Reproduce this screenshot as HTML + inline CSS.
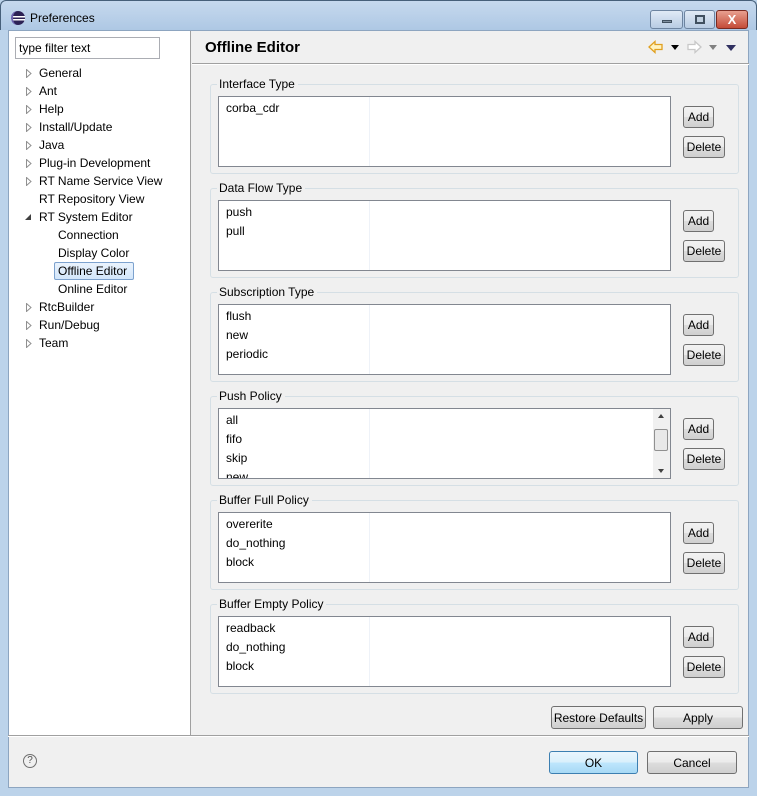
<!DOCTYPE html>
<html><head><style>
*{margin:0;padding:0;box-sizing:border-box}
body{width:757px;height:796px;overflow:hidden;background:#bcd3ea;font-family:"Liberation Sans",sans-serif;font-size:12px;color:#000;position:relative}
.a{position:absolute}
.title{left:0;top:0;width:757px;height:30px;background:linear-gradient(#c6d9ee,#aec8e4);border:1px solid #47607a;border-bottom:none;border-radius:6px 6px 0 0}
.inner{left:8px;top:30px;width:741px;height:758px;background:#f0f0f0;border:1px solid #8da5c0}
.left{left:9px;top:31px;width:182px;height:704px;background:#fff;border-right:1px solid #a0a0a0}
.btn{position:absolute;border:1px solid #707070;border-radius:3px;background:linear-gradient(#f2f2f2 0%,#ebebeb 50%,#dddddd 51%,#cfcfcf 100%);text-align:center;line-height:21px;font-size:12px}
.tree div{position:absolute;white-space:nowrap}
.arr{width:9px;height:9px}
.grp{position:absolute;left:210px;width:529px;height:90px;border:1px solid #d5dfe5;border-radius:3px}
.glab{position:absolute;left:6px;top:-9px;background:#f0f0f0;padding:0 3px 0 2px;line-height:16px}
.list{position:absolute;left:7px;top:11px;width:453px;height:71px;background:#fff;border:1px solid #828790;overflow:hidden}
.list .col{position:absolute;left:150px;top:0;width:1px;height:100%;background:#eef2f8}
.list div.i{position:absolute;left:7px;line-height:19px;margin-top:1px}
</style></head><body>
<div class="a title"></div>
<svg class="a" style="left:10px;top:10px" width="16" height="16"><circle cx="8" cy="8" r="7" fill="#2c2255"/><rect x="1" y="6" width="14" height="1.5" fill="#fff"/><rect x="1" y="9" width="14" height="1.5" fill="#fff"/><path d="M8 1a7 7 0 0 0 0 14a5 7 0 0 1 0-14z" fill="#6c63b0"/></svg>
<div class="a" style="left:30px;top:11px;font-size:12px">Preferences</div>
<div class="a" style="left:650px;top:10px;width:33px;height:19px;border:1px solid #6d84a0;border-radius:3px;background:linear-gradient(#e0eaf6,#b8cce3)"><div class="a" style="left:11px;top:9px;width:10px;height:3px;background:#8090a0;border:1px solid #405060"></div></div>
<div class="a" style="left:684px;top:10px;width:31px;height:19px;border:1px solid #6d84a0;border-radius:3px;background:linear-gradient(#e0eaf6,#b8cce3)"><div class="a" style="left:10px;top:4px;width:10px;height:9px;border:2px solid #405060;background:#c0d0e0"></div></div>
<div class="a" style="left:716px;top:10px;width:32px;height:19px;border:1px solid #7a2a20;border-radius:3px;background:linear-gradient(#e8a090,#c44c38);color:#fff;font-weight:bold;text-align:center;line-height:17px;font-size:13px">X</div>
<div class="a inner"></div>
<div class="a left"></div>
<div class="a" style="left:15px;top:37px;width:145px;height:22px;border:1px solid #abadb3;background:#fff;padding-left:3px;line-height:20px">type filter text</div>
<svg class="a" width="0" height="0"><defs><symbol id="t" viewBox="0 0 9 9"><path d="M2.5 0.5L7 4.5L2.5 8.5Z" fill="#fff" stroke="#909090"/></symbol></defs></svg>
<div class="tree">
<svg style="position:absolute;left:24px;top:69px" class="arr"><use href="#t"/></svg><div style="left:39px;top:66px">General</div>
<svg style="position:absolute;left:24px;top:87px" class="arr"><use href="#t"/></svg><div style="left:39px;top:84px">Ant</div>
<svg style="position:absolute;left:24px;top:105px" class="arr"><use href="#t"/></svg><div style="left:39px;top:102px">Help</div>
<svg style="position:absolute;left:24px;top:123px" class="arr"><use href="#t"/></svg><div style="left:39px;top:120px">Install/Update</div>
<svg style="position:absolute;left:24px;top:141px" class="arr"><use href="#t"/></svg><div style="left:39px;top:138px">Java</div>
<svg style="position:absolute;left:24px;top:159px" class="arr"><use href="#t"/></svg><div style="left:39px;top:156px">Plug-in Development</div>
<svg style="position:absolute;left:24px;top:177px" class="arr"><use href="#t"/></svg><div style="left:39px;top:174px">RT Name Service View</div>
<div style="left:39px;top:192px">RT Repository View</div>
<div style="left:25px;top:214px;width:0;height:0;border-right:6px solid #404040;border-top:6px solid transparent"></div><div style="left:39px;top:210px">RT System Editor</div>
<div style="left:58px;top:228px">Connection</div>
<div style="left:58px;top:246px">Display Color</div>
<div style="left:54px;top:262px;width:80px;height:18px;border:1px solid #7da2ce;border-radius:2px;background:linear-gradient(#eaf3fd,#d3e6fa)"></div><div style="left:58px;top:264px">Offline Editor</div>
<div style="left:58px;top:282px">Online Editor</div>
<svg style="position:absolute;left:24px;top:303px" class="arr"><use href="#t"/></svg><div style="left:39px;top:300px">RtcBuilder</div>
<svg style="position:absolute;left:24px;top:321px" class="arr"><use href="#t"/></svg><div style="left:39px;top:318px">Run/Debug</div>
<svg style="position:absolute;left:24px;top:339px" class="arr"><use href="#t"/></svg><div style="left:39px;top:336px">Team</div>
</div>
<div class="a" style="left:205px;top:39px;font-size:15px;font-weight:bold">Offline Editor</div>
<div class="a" style="left:192px;top:63px;width:557px;height:1px;background:#a0a0a0"></div>
<div class="a" style="left:192px;top:64px;width:557px;height:1px;background:#fff"></div>
<svg class="a" style="left:648px;top:40px" width="16" height="14"><path d="M1 7L7 1.5V4.5H14V9.5H7V12.5Z" fill="#fff3c0" stroke="#e0a020" stroke-width="1.3"/></svg>
<div class="a" style="left:671px;top:45px;border-top:5px solid #000;border-left:4px solid transparent;border-right:4px solid transparent"></div>
<svg class="a" style="left:686px;top:40px" width="16" height="14"><path d="M15 7L9 1.5V4.5H2V9.5H9V12.5Z" fill="#fff" stroke="#c8c8c8" stroke-width="1.3"/></svg>
<div class="a" style="left:709px;top:45px;border-top:5px solid #808080;border-left:4px solid transparent;border-right:4px solid transparent"></div>
<div class="a" style="left:726px;top:45px;border-top:6px solid #303060;border-left:5px solid transparent;border-right:5px solid transparent"></div>

<div class="grp" style="top:84px"><div class="glab">Interface Type</div><div class="list"><div class="col"></div><div class="i" style="top:1px">corba_cdr</div></div></div>
<div class="grp" style="top:188px"><div class="glab">Data Flow Type</div><div class="list"><div class="col"></div><div class="i" style="top:1px">push</div><div class="i" style="top:20px">pull</div></div></div>
<div class="grp" style="top:292px"><div class="glab">Subscription Type</div><div class="list"><div class="col"></div><div class="i" style="top:1px">flush</div><div class="i" style="top:20px">new</div><div class="i" style="top:39px">periodic</div></div></div>
<div class="grp" style="top:396px"><div class="glab">Push Policy</div><div class="list"><div class="col"></div><div class="i" style="top:1px">all</div><div class="i" style="top:20px">fifo</div><div class="i" style="top:39px">skip</div><div class="i" style="top:58px">new</div>
<div style="position:absolute;right:0;top:0;width:17px;height:69px;background:#f0f0f0"><div style="position:absolute;left:5px;top:5px;border-bottom:4px solid #404040;border-left:3px solid transparent;border-right:3px solid transparent"></div><div style="position:absolute;left:1px;top:20px;width:14px;height:22px;border:1px solid #909090;border-radius:2px;background:#e8e8e8"></div><div style="position:absolute;left:5px;top:60px;border-top:4px solid #404040;border-left:3px solid transparent;border-right:3px solid transparent"></div></div></div></div>
<div class="grp" style="top:500px"><div class="glab">Buffer Full Policy</div><div class="list"><div class="col"></div><div class="i" style="top:1px">overerite</div><div class="i" style="top:20px">do_nothing</div><div class="i" style="top:39px">block</div></div></div>
<div class="grp" style="top:604px"><div class="glab">Buffer Empty Policy</div><div class="list"><div class="col"></div><div class="i" style="top:1px">readback</div><div class="i" style="top:20px">do_nothing</div><div class="i" style="top:39px">block</div></div></div>

<div class="btn" style="left:683px;top:106px;width:31px;height:22px">Add</div><div class="btn" style="left:683px;top:136px;width:42px;height:22px">Delete</div>
<div class="btn" style="left:683px;top:210px;width:31px;height:22px">Add</div><div class="btn" style="left:683px;top:240px;width:42px;height:22px">Delete</div>
<div class="btn" style="left:683px;top:314px;width:31px;height:22px">Add</div><div class="btn" style="left:683px;top:344px;width:42px;height:22px">Delete</div>
<div class="btn" style="left:683px;top:418px;width:31px;height:22px">Add</div><div class="btn" style="left:683px;top:448px;width:42px;height:22px">Delete</div>
<div class="btn" style="left:683px;top:522px;width:31px;height:22px">Add</div><div class="btn" style="left:683px;top:552px;width:42px;height:22px">Delete</div>
<div class="btn" style="left:683px;top:626px;width:31px;height:22px">Add</div><div class="btn" style="left:683px;top:656px;width:42px;height:22px">Delete</div>

<div class="btn" style="left:551px;top:706px;width:95px;height:23px;line-height:22px">Restore Defaults</div>
<div class="btn" style="left:653px;top:706px;width:90px;height:23px;line-height:22px">Apply</div>
<div class="a" style="left:8px;top:735px;width:741px;height:1px;background:#a0a0a0"></div>
<div class="a" style="left:8px;top:736px;width:741px;height:1px;background:#fff"></div>
<div class="a" style="left:23px;top:754px;width:14px;height:14px;border:1px solid #707070;border-radius:50%;font-size:10px;text-align:center;line-height:12px;color:#505050">?</div>
<div class="btn" style="left:549px;top:751px;width:89px;height:23px;line-height:22px;border-color:#3c7fb1;background:linear-gradient(#eaf6fd,#d9f0fc 50%,#bee6fd 51%,#a7d9f5)">OK</div>
<div class="btn" style="left:647px;top:751px;width:90px;height:23px;line-height:22px">Cancel</div>
</body></html>
